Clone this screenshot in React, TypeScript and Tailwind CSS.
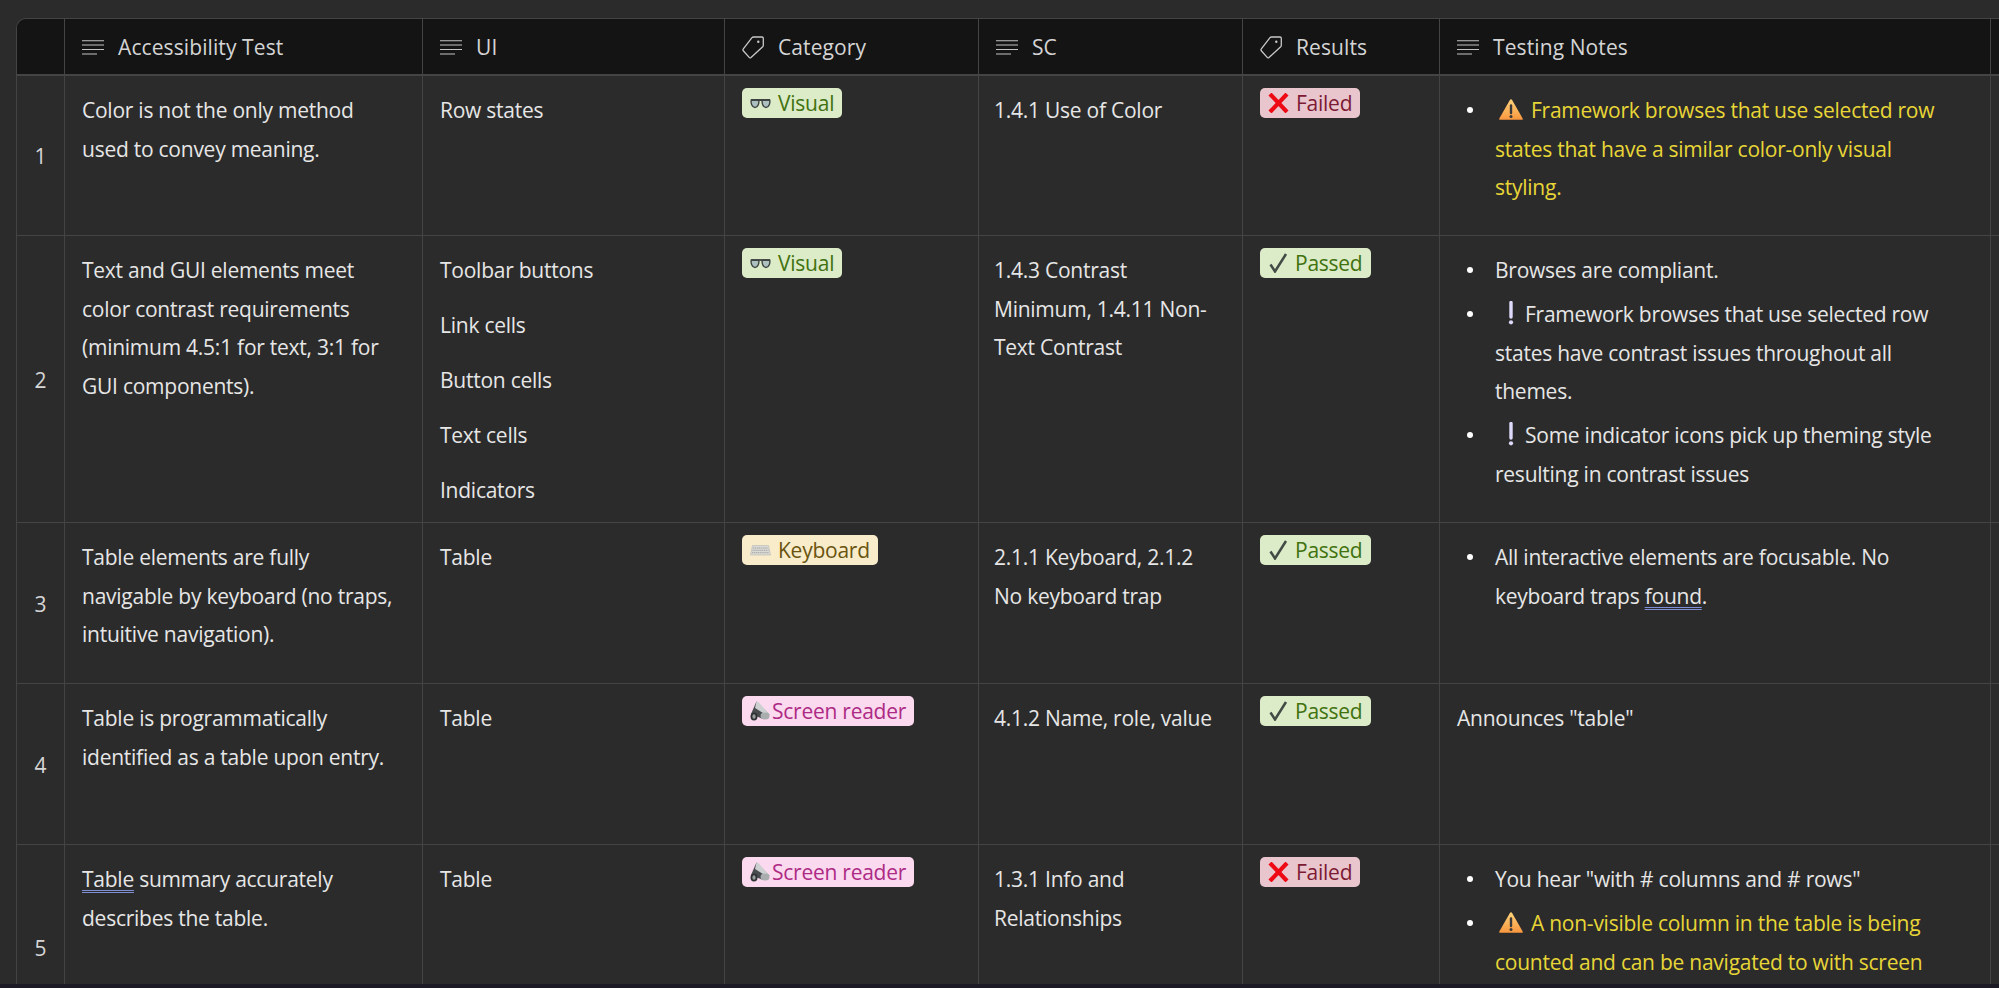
import React from "react";

function LinesIcon() {
  return (
    <svg width="22" height="15" viewBox="0 0 22 15" className="shrink-0" fill="none">
      <path d="M0 .75h22" stroke="#c4c4c4" strokeWidth="1.1" />
      <path d="M0 5h22" stroke="#c4c4c4" strokeWidth="1.1" />
      <path d="M0 9.500h22" stroke="#c4c4c4" strokeWidth="1.1" />
      <path d="M0 14h15" stroke="#c4c4c4" strokeWidth="1.1" />
    </svg>
  );
}

function TagIcon() {
  return (
    <svg width="22" height="23" viewBox="0 0 22 23" className="shrink-0" fill="none">
      <path d="M11.500 1h8.500c.8 0 1.300.5 1.300 1.300v7c0 .6-.2 1-.6 1.400L9 21.500c-.6.500-1.300.5-1.800-.1L1.300 14.800c-.5-.6-.5-1.300 0-1.900L10 1.700c.4-.5.900-.7 1.500-.7Z" stroke="#c8c8c8" strokeWidth="1.300" strokeLinejoin="round" />
      <circle cx="16.300" cy="5.800" r="1.200" fill="#c8c8c8" />
    </svg>
  );
}

function Glasses() {
  return (
    <svg width="21" height="11" viewBox="0 0 21 11" className="shrink-0">
      <path d="M1 2h19" stroke="#3f4342" strokeWidth="1.800" />
      <path d="M1.200 2.200h7.600c.4 3-.8 7.300-3.800 7.300s-4.200-4.300-3.800-7.300ZM12.200 2.200h7.600c.4 3-.8 7.300-3.800 7.300s-4.200-4.300-3.800-7.300Z" fill="#adc0c0" stroke="#3f4342" strokeWidth="1.400" />
    </svg>
  );
}

function Keyboard() {
  return (
    <svg width="21" height="11" viewBox="0 0 21 11" className="shrink-0">
      <path d="M2.500.5h16l2 9.500H.5Z" fill="#dadad6" stroke="#bdbdb8" strokeWidth="0.700" />
      <path d="M3 3h15M2.500 5.300h16M2 7.700h17" stroke="#a4a4a0" strokeWidth="1" strokeDasharray="1.300 .6" />
    </svg>
  );
}

function Speaker() {
  return (
    <svg width="20" height="20" viewBox="0 0 20 20" className="shrink-0">
      <path d="M6.500.5 19.500 13.500 13 18 1 13Z" fill="#484c4f" />
      <path d="M6.500.5 8.500 1 19.500 13.500 13 12 5 7Z" fill="#cdd0d0" />
      <ellipse cx="15" cy="15" rx="4.500" ry="3.500" fill="#a9adae" />
      <ellipse cx="4" cy="15.500" rx="3.500" ry="4" fill="#2f3234" />
      <ellipse cx="4" cy="15.500" rx="1.600" ry="2.200" fill="#9a9d9e" />
    </svg>
  );
}

function Cross() {
  return (
    <svg width="21" height="20" viewBox="0 0 21 20" className="shrink-0">
      <path d="M2 1 19 19M19 1 2 19" stroke="#ee0a14" strokeWidth="4.200" />
    </svg>
  );
}

function Check() {
  return (
    <svg width="19" height="20" viewBox="0 0 19 20" className="shrink-0">
      <path d="M1.500 11.500 6 18.500 17 1" stroke="#434b45" strokeWidth="2.500" fill="none" />
    </svg>
  );
}

function Warning() {
  return (
    <svg width="24" height="21" viewBox="0 0 24 21" className="ml-[4px] mr-[8px] inline-block align-[-2px]">
      <defs>
        <linearGradient id="warn" x1="0" y1="0" x2="0" y2="1">
          <stop offset="0" stopColor="#ffd47a" />
          <stop offset="1" stopColor="#f8963e" />
        </linearGradient>
      </defs>
      <path d="M12 .3c.5 0 .8.3 1.100.7L23.700 19.500c.3.700-.1 1.300-.8 1.300H1.100c-.7 0-1.100-.6-.8-1.300L10.900 1c.3-.4.600-.7 1.100-.7Z" fill="url(#warn)" />
      <path d="M12 6.500v7.500" stroke="#3a3a3a" strokeWidth="2.400" strokeLinecap="round" />
      <circle cx="12" cy="17.500" r="1.500" fill="#3a3a3a" />
    </svg>
  );
}

function Bang() {
  return (
    <svg width="6" height="24" viewBox="0 0 6 24" className="ml-[13px] mr-[11px] inline-block align-[-3px]">
      <path d="M3 1.500v14.500" stroke="#ddd9fb" strokeWidth="3.400" strokeLinecap="round" />
      <circle cx="3" cy="21.300" r="2.100" fill="#ddd9fb" />
    </svg>
  );
}

type TagKind = "visual" | "keyboard" | "reader" | "failed" | "passed";

const pillBase = "flex h-[30px] w-fit items-center rounded-[5px] ";

function Pill({ kind }: { kind: TagKind }) {
  if (kind === "visual")
    return (
      <span className={pillBase + "gap-[7px] bg-[#dcebc8] px-[8px] text-[#41720f]"}>
        <Glasses />
        Visual
      </span>
    );
  if (kind === "keyboard")
    return (
      <span className={pillBase + "gap-[7px] bg-[#f8eccb] px-[8px] text-[#6a5410]"}>
        <Keyboard />
        Keyboard
      </span>
    );
  if (kind === "reader")
    return (
      <span className={pillBase + "gap-[2px] bg-[#fbd9ee] px-[8px] text-[#ad2a85]"}>
        <Speaker />
        Screen reader
      </span>
    );
  if (kind === "failed")
    return (
      <span className={pillBase + "gap-[7px] bg-[#e9c6cd] px-[8px] text-[#7d1a34]"}>
        <Cross />
        Failed
      </span>
    );
  return (
    <span className={pillBase + "gap-[7px] bg-[#dcebc8] px-[9px] text-[#41720f]"}>
      <Check />
      Passed
    </span>
  );
}

function Header({ icon, label }: { icon: "lines" | "tag"; label: string }) {
  return (
    <th className="border-r border-[#444444] bg-[#141414] px-[17px] pt-[2px] text-left font-medium tracking-[0.1px] text-[#d4d4d4]">
      <span className="flex items-center gap-[14px]">
        {icon === "lines" ? <LinesIcon /> : <TagIcon />}
        {label}
      </span>
    </th>
  );
}

function Notes({ children }: { children: React.ReactNode }) {
  return <ul>{children}</ul>;
}

function Item({ children, warn }: { children: React.ReactNode; warn?: boolean }) {
  return (
    <li className={"mb-[5.4px] flex" + (warn ? " text-[#e8d637]" : "")}>
      <span className="ml-[10px] mr-[22px] mt-[16px] h-[6px] w-[6px] shrink-0 rounded-full bg-white" />
      <div>{children}</div>
    </li>
  );
}

const Wavy = ({ children }: { children: React.ReactNode }) => (
  <span className="underline decoration-[#7f8fd6] decoration-double decoration-[1px] underline-offset-[3px]">{children}</span>
);

const td = "border-r border-b border-[#444444] pt-[12px] px-[17px] align-top";
const tdText = "border-r border-b border-[#444444] pt-[15px] px-[17px] align-top";
const tdFirst = "border-r border-b border-[#444444] pt-[15px] pl-[17px] pr-[21px] align-top";
const tdSc = "border-r border-b border-[#444444] pt-[15px] pl-[15px] pr-[26px] align-top";
const tdNotes = "border-r border-b border-[#444444] pt-[15px] pl-[17px] pr-[40px] align-top";
const num = "border-r border-b border-[#444444] pt-[2px] text-center align-middle text-[#d6d6d6]";

export default function App() {
  return (
    <div className="h-[988px] w-[1999px] overflow-hidden bg-[#2b2b2b] [font-family:'Open_Sans','Noto_Sans',sans-serif]">
      <div className="h-[984px] overflow-hidden pl-[16px] pt-[18px]">
        <div className="w-[2300px] overflow-hidden rounded-tl-[10px] border-l border-t border-[#444444]">
          <table className="w-[2283px] table-fixed border-separate border-spacing-0 text-[21px] leading-[38.6px] tracking-[-0.25px] text-[#e6e6e6]">
            <colgroup>
              <col className="w-[48px]" />
              <col className="w-[358px]" />
              <col className="w-[302px]" />
              <col className="w-[254px]" />
              <col className="w-[264px]" />
              <col className="w-[197px]" />
              <col className="w-[551px]" />
              <col className="w-[309px]" />
            </colgroup>
            <thead>
              <tr className="h-[55px]">
                <th className="border-r border-[#444444] bg-[#141414]" />
                <Header icon="lines" label="Accessibility Test" />
                <Header icon="lines" label="UI" />
                <Header icon="tag" label="Category" />
                <Header icon="lines" label="SC" />
                <Header icon="tag" label="Results" />
                <Header icon="lines" label="Testing Notes" />
                <th className="bg-[#141414]" />
              </tr>
              <tr className="h-0">
                <td colSpan={8} className="border-t-2 border-[#444444] p-0" />
              </tr>
            </thead>
            <tbody>
              <tr className="h-[160px]">
                <td className={num}>1</td>
                <td className={tdFirst}>Color is not the only method used to convey meaning.</td>
                <td className={tdText}>Row states</td>
                <td className={td}><Pill kind="visual" /></td>
                <td className={tdSc}>1.4.1 Use of Color</td>
                <td className={td}><Pill kind="failed" /></td>
                <td className={tdNotes}>
                  <Notes>
                    <Item warn><Warning />Framework browses that use selected row states that have a similar color-only visual styling.</Item>
                  </Notes>
                </td>
                <td className="border-b border-[#444444]" />
              </tr>
              <tr className="h-[287px]">
                <td className={num}>2</td>
                <td className={tdFirst}>Text and GUI elements meet color contrast requirements (minimum 4.5:1 for text, 3:1 for GUI components).</td>
                <td className={tdText}>
                  <p className="mb-[16.4px]">Toolbar buttons</p>
                  <p className="mb-[16.4px]">Link cells</p>
                  <p className="mb-[16.4px]">Button cells</p>
                  <p className="mb-[16.4px]">Text cells</p>
                  <p>Indicators</p>
                </td>
                <td className={td}><Pill kind="visual" /></td>
                <td className={tdSc}>1.4.3 Contrast Minimum, 1.4.11 Non-Text Contrast</td>
                <td className={td}><Pill kind="passed" /></td>
                <td className={tdNotes}>
                  <Notes>
                    <Item>Browses are compliant.</Item>
                    <Item><Bang />Framework browses that use selected row states have contrast issues throughout all themes.</Item>
                    <Item><Bang />Some indicator icons pick up theming style resulting in contrast issues</Item>
                  </Notes>
                </td>
                <td className="border-b border-[#444444]" />
              </tr>
              <tr className="h-[161px]">
                <td className={num}>3</td>
                <td className={tdFirst}>Table elements are fully navigable by keyboard (no traps, intuitive navigation).</td>
                <td className={tdText}>Table</td>
                <td className={td}><Pill kind="keyboard" /></td>
                <td className={tdSc}>2.1.1 Keyboard, 2.1.2 No keyboard trap</td>
                <td className={td}><Pill kind="passed" /></td>
                <td className={tdNotes}>
                  <Notes>
                    <Item>All interactive elements are focusable. No keyboard traps <Wavy>found</Wavy>.</Item>
                  </Notes>
                </td>
                <td className="border-b border-[#444444]" />
              </tr>
              <tr className="h-[161px]">
                <td className={num}>4</td>
                <td className={tdFirst}>Table is programmatically identified as a table upon entry.</td>
                <td className={tdText}>Table</td>
                <td className={td}><Pill kind="reader" /></td>
                <td className={tdSc}>4.1.2 Name, role, value</td>
                <td className={td}><Pill kind="passed" /></td>
                <td className={tdNotes}>Announces "table"</td>
                <td className="border-b border-[#444444]" />
              </tr>
              <tr>
                <td className={num}>5</td>
                <td className={tdFirst}><Wavy>Table</Wavy> summary accurately describes the table.</td>
                <td className={tdText}>Table</td>
                <td className={td}><Pill kind="reader" /></td>
                <td className={tdSc}>1.3.1 Info and Relationships</td>
                <td className={td}><Pill kind="failed" /></td>
                <td className={tdNotes}>
                  <Notes>
                    <Item>You hear "with # columns and # rows"</Item>
                    <Item warn><Warning />A non-visible column in the table is being counted and can be navigated to with screen readers.</Item>
                  </Notes>
                  <div className="h-[24px]" />
                </td>
                <td className="border-b border-[#444444]" />
              </tr>
            </tbody>
          </table>
        </div>
      </div>
      <div className="h-[4px] bg-[#1c1a24]" />
    </div>
  );
}
